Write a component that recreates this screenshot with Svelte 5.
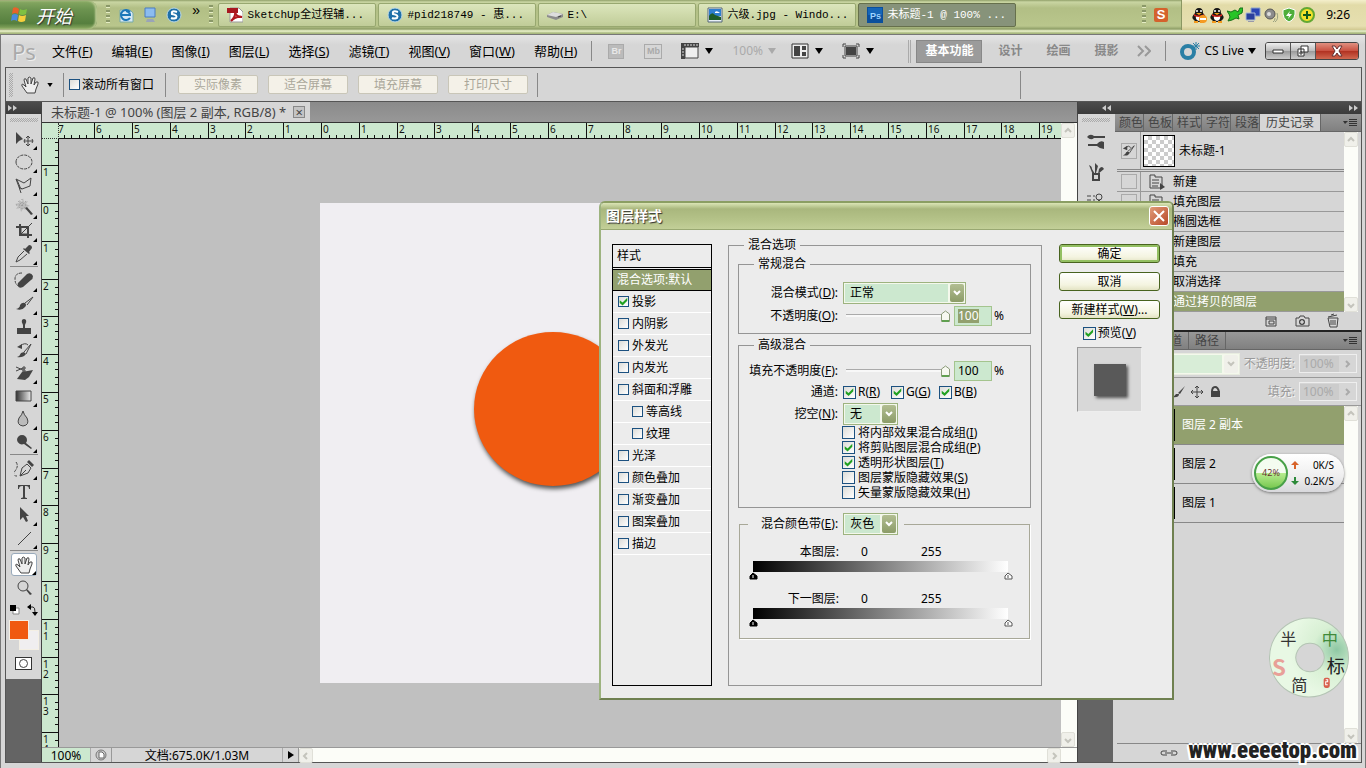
<script lang="ts">
	interface Tool {
		name: string;
		line?: string;
		solid?: string;
		dashed?: string;
		pale?: string;
		gap?: boolean;
		single?: boolean;
	}

	const hand =
		'M7 18L2 11Q1 8 4 10L6 12L4 5Q4 3 6 4L8 9V3Q9 1 11 3V9L13 3Q15 2 15 4L14 10L16 7Q19 6 18 9L16 14L15 18Z';

	const tools: Tool[] = [
		{ name: '移动', solid: 'M2 3V15L5 12L9 10Z', line: 'M10 12H19M14 8V16M12 9L14 7L16 9M12 15L14 17L16 15M11 10L10 12L11 14M18 10L19 12L18 14' },
		{ name: '椭圆选框', dashed: 'M2 10A8 7 0 0 1 18 10A8 7 0 0 1 2 10' },
		{ name: '多边形套索', line: 'M2 4L10 8L17 3L16 11L8 14L5 12ZM8 14L5 12L7 18M3 5L6 12' },
		{ name: '魔棒', pale: 'M9 0L10 4L14 3L12 6L16 8L12 9L13 12L9 11L7 14L6 10L2 11L4 8L1 6L5 5L5 2L8 4Z', solid: 'M11 10L13 9L19 16L17 17Z', dashed: 'M8 1V13M2 7H14M4 3L12 11M12 3L4 11' },
		{ name: '裁剪', line: 'M6 14L18 2M7 6V13H14', solid: 'M5 3H7V13H18V15H5ZM2 5H15V17H13V7H2Z' },
		{ name: '吸管', solid: 'M11 5L15 1Q18 1 18 4L15 8L16 9L15 10L9 5L10 4Z', line: 'M10 7L4 13L2 18L6 16L13 10' },
		{ name: '污点修复', dashed: 'M8 2Q1 2 1 8T5 15', solid: 'M5 11L13 3Q17 1 19 5Q19 8 17 9L9 16Q5 18 4 15Q3 12 5 11Z', gap: true },
		{ name: '画笔', solid: 'M2 15Q6 14 6 11Q8 8 11 9Q13 11 11 13Q8 17 2 15Z', line: 'M11 9L19 3L13 11' },
		{ name: '图章', solid: 'M8 3Q10 1 12 3Q13 5 11 8V11H17V17H3V11H9V8Q7 5 8 3Z' },
		{ name: '历史记录画笔', solid: 'M3 17Q6 16 7 13L10 12L12 14Q9 18 3 17ZM3 7L8 4V9Z', line: 'M10 12L17 4L12 14M6 6Q11 2 14 5' },
		{ name: '橡皮擦', solid: 'M8 9L19 7L15 14L11 17L3 16Z', line: 'M2 4L9 7M2 8L9 5M9 4H11V6H9ZM9 7H11V9H9Z' },
		{ name: '渐变' },
		{ name: '模糊', pale: 'M9 2Q10 6 13 9Q16 16 9 17Q2 16 5 9Q8 6 9 2Z', line: 'M9 2Q10 6 13 9Q16 16 9 17Q2 16 5 9Q8 6 9 2Z' },
		{ name: '减淡', solid: 'M3 8A5 5 0 0 1 13 8A5 5 0 0 1 12 11L18 16L17 17L10 12A5 5 0 0 1 3 8Z' },
		{ name: '钢笔', dashed: 'M2 3Q5 7 1 12T3 17', line: 'M6 17L8 9L13 5L17 9L14 14ZM6 17L12 11', solid: 'M13 3L15 1L20 6L18 8Z', gap: true },
		{ name: '文字', solid: 'M4 3H16V7H15Q15 4 12 4H11V15Q11 16 13 16V17H7V16Q9 16 9 15V4H8Q5 4 5 7H4Z' },
		{ name: '路径选择', solid: 'M6 2V15L9 12L12 17L14 16L12 11H15Z' },
		{ name: '直线', line: 'M4 17L17 4' },
		{ name: '抓手', line: hand, gap: true },
		{ name: '缩放', line: 'M4 8A5 5 0 0 1 14 8A5 5 0 0 1 4 8', solid: 'M12 12L13 11L18 16L16 17Z', single: true }
	];

	const menus = [
		['文件', 'F'], ['编辑', 'E'], ['图像', 'I'], ['图层', 'L'], ['选择', 'S'],
		['滤镜', 'T'], ['视图', 'V'], ['窗口', 'W'], ['帮助', 'H']
	];

	const tasks = [
		{ icon: 'pdf', title: 'SketchUp全过程辅...' },
		{ icon: 'sogou', title: '#pid218749 - 惠...' },
		{ icon: 'disk', title: 'E:\\' },
		{ icon: 'photo', title: '六级.jpg - Windo...' },
		{ icon: 'ps', title: '未标题-1 @ 100% ...' }
	];

	const fits = ['实际像素', '适合屏幕', '填充屏幕', '打印尺寸'];
	const panelTabs = ['颜色', '色板', '样式', '字符', '段落'];
	const history = ['新建', '填充图层', '椭圆选框', '新建图层', '填充', '取消选择', '通过拷贝的图层'];
	const layers = ['图层 2 副本', '图层 2', '图层 1'];

	let effects = [
		{ name: '投影', on: true, sub: false },
		{ name: '内阴影', on: false, sub: false },
		{ name: '外发光', on: false, sub: false },
		{ name: '内发光', on: false, sub: false },
		{ name: '斜面和浮雕', on: false, sub: false },
		{ name: '等高线', on: false, sub: true },
		{ name: '纹理', on: false, sub: true },
		{ name: '光泽', on: false, sub: false },
		{ name: '颜色叠加', on: false, sub: false },
		{ name: '渐变叠加', on: false, sub: false },
		{ name: '图案叠加', on: false, sub: false },
		{ name: '描边', on: false, sub: false }
	];

	let channels = [
		{ key: 'R', on: true },
		{ key: 'G', on: true },
		{ key: 'B', on: true }
	];

	let advanced = [
		{ name: '将内部效果混合成组', key: 'I', on: false },
		{ name: '将剪贴图层混合成组', key: 'P', on: true },
		{ name: '透明形状图层', key: 'T', on: true },
		{ name: '图层蒙版隐藏效果', key: 'S', on: false },
		{ name: '矢量蒙版隐藏效果', key: 'H', on: false }
	];

	let opacity = 100;
	let fill = 100;
	let preview = true;

	// One centimetre on the rulers
	const cm = 37.8;
	const range = (from: number, to: number) => Array.from({ length: to - from + 1 }, (_, i) => from + i);
	const across = range(-7, 19).map((n) => ({ n: Math.abs(n), at: Math.round(262 + n * cm) }));
	const down = range(-2, 14).map((n) => ({ n: Math.abs(n), at: Math.round(64 + n * cm) }));
	const minor = [1, 2, 3, 4].map((n) => Math.round((n * cm) / 5));
</script>

{#snippet keyed(text: string, key: string, tail = '')}<span>{text}(<u>{key}</u>){tail}</span>{/snippet}

{#snippet arrow()}<svg class="arrow" viewBox="0 0 8 6" aria-hidden="true"><path d="M0 0H8L4 6Z" /></svg>{/snippet}

{#snippet chevron(d: string)}<svg class="chev" viewBox="0 0 10 10" aria-hidden="true"><path {d} /></svg>{/snippet}

{#snippet scrollbar(kind: string)}
	<div class="scroll {kind}">
		<button aria-label="向前滚动">{@render chevron(kind === 'flat' ? 'M6 2L3 5L6 8' : 'M2 6L5 3L8 6')}</button>
		<button aria-label="向后滚动">{@render chevron(kind === 'flat' ? 'M4 2L7 5L4 8' : 'M2 4L5 7L8 4')}</button>
	</div>
{/snippet}

{#snippet panelMenu()}
	<svg class="panel-menu" viewBox="0 0 14 10" aria-hidden="true">
		<path d="M0 3H5L2 6Z" /><path d="M6 1H14V2H6ZM6 3H14V4H6ZM6 5H14V6H6ZM6 7H14V8H6Z" />
	</svg>
{/snippet}

{#snippet taskIcon(name: string)}
	<svg class="icon16" viewBox="0 0 16 16" aria-hidden="true">
		{#if name === 'pdf'}
			<path d="M3 1H12L16 5V15H3Z" fill="#fff" stroke="#999" /><path d="M0 1H11V6H0Z" fill="#a81820" />
			<path d="M4 14Q9 9 8 5Q9 10 15 10Q9 9 4 14" fill="none" stroke="#b01820" stroke-width="2" />
		{:else if name === 'sogou'}
			<circle cx="8" cy="8" r="7" fill="#1f6fa8" stroke="#b9d8e6" />
			<path d="M11 5Q5 3 6 7Q12 8 10 11Q7 12 5 11" fill="none" stroke="#fff" stroke-width="2" />
		{:else if name === 'disk'}
			<path d="M0 8L6 5L16 7V10L9 13L0 10Z" fill="#8c8c8c" /><path d="M0 8L6 5L16 7L9 10Z" fill="#ddd" />
			<path d="M11 10L14 9" stroke="#444" />
		{:else if name === 'photo'}
			<path d="M1 1H15V15H1Z" fill="#e8f0f8" stroke="#567" /><path d="M2 2H14V9H2Z" fill="#2f7fd0" />
			<path d="M2 9Q5 4 8 8L14 10V13H2Z" fill="#1e5c2a" /><path d="M8 5Q10 3 13 6H8Z" fill="#fff" />
		{:else if name === 'ps'}
			<path d="M0 0H16V16H0Z" fill="#0b4f9c" /><path d="M1 1H15V8H1Z" fill="#1566b8" />
			<text x="3" y="12" font-size="9" font-weight="700" fill="#9fd4ff" font-family="Liberation Sans, sans-serif">Ps</text>
		{:else if name === 'ie'}
			<path d="M2 3H12L15 6V15H2Z" fill="#d6e8f6" stroke="#7aa" /><path d="M12 5A5 5 0 1 0 12 11M4 8H12Q12 5 8 4" fill="none" stroke="#1b76b8" stroke-width="2" />
		{:else if name === 'desk'}
			<path d="M3 1H13V10H3Z" fill="#8bbcf0" stroke="#4b7cc0" /><path d="M5 12H11L13 15H4Z" fill="#9aa4b8" />
		{:else if name === 'qq' || name === 'qqbusy'}
			<path d="M8 1Q12 1 12 6Q16 10 14 12Q12 15 8 15Q4 15 2 12Q0 10 4 6Q4 1 8 1Z" fill="#161616" />
			<path d="M5 9H11Q12 13 8 14Q4 13 5 9Z" fill="#fff" /><path d="M3 7Q8 10 13 7V9Q8 11 3 9Z" fill="#d8231c" />
			<circle cx="6" cy="4" r="1" fill="#fff" /><circle cx="10" cy="4" r="1" fill="#fff" /><path d="M5 6H11L8 8Z" fill="#f7a51c" />
			<path d="M3 14H7V16H3ZM9 14H13V16H9Z" fill="#f39a1c" />
			{#if name === 'qqbusy'}<circle cx="12" cy="12" r="4" fill="#f59a23" /><path d="M9 11H15V13H9Z" fill="#fff" />{/if}
		{:else if name === 'turtle'}
			<path d="M0 4L4 5L8 3L11 5L13 1H16L15 6L11 8L12 12L9 11L5 13L1 14L3 10L2 7Z" fill="#27c427" stroke="#17701a" />
		{:else if name === 'net'}
			<path d="M6 1H15V9H6Z" fill="#2c46b4" stroke="#8fa4c8" /><path d="M1 6H10V13H1Z" fill="#2a3f9c" stroke="#a8b8d8" /><path d="M3 14H9V15H3Z" fill="#99a" />
		{:else if name === 'sound'}
			<circle cx="7" cy="7" r="5" fill="#8c8c8c" stroke="#555" /><circle cx="6" cy="7" r="2" fill="#ddd" />
			<path d="M12 15Q16 12 14 6M10 15Q12 14 12 11" fill="none" stroke="#98a080" />
		{:else if name === 'shield'}
			<path d="M8 1L14 3Q15 12 8 15Q1 12 2 3Z" fill="#4fae3a" stroke="#fff" /><path d="M9 4L5 9H8L7 12L11 7H8Z" fill="#fff" />
		{:else if name === 'plus'}
			<circle cx="8" cy="8" r="7" fill="#f3e22a" stroke="#62a832" stroke-width="2" /><path d="M7 4H9V7H12V9H9V12H7V9H4V7H7Z" fill="#125c1c" />
		{/if}
	</svg>
{/snippet}

<div class="screen">
	<header class="taskbar">
		<button class="start">
			<svg viewBox="0 0 20 20" aria-hidden="true">
				<path d="M3 3Q6 1 9 4L8 9Q5 7 2 9Z" fill="#e8622a" /><path d="M10 4Q13 6 17 4L16 9Q12 11 9 9Z" fill="#7fc142" />
				<path d="M2 10Q5 8 8 10L7 16Q4 14 1 16Z" fill="#4a8ae0" /><path d="M9 10Q12 12 16 10L15 16Q11 18 8 16Z" fill="#f6cf3c" />
			</svg>
			开始
		</button>
		<i class="dots"></i>
		<nav class="quick">
			{@render taskIcon('ie')}
			{@render taskIcon('desk')}
			{@render taskIcon('sogou')}
			<span>»</span>
		</nav>
		<i class="dots"></i>
		<nav class="tasks">
			{#each tasks as task (task.title)}
				<button class:active={task.icon === 'ps'}>{@render taskIcon(task.icon)}{task.title}</button>
			{/each}
		</nav>
		<i class="dots"></i>
		<span class="ime">S</span>
		<div class="tray">
			{#each ['qqbusy', 'qq', 'turtle', 'net', 'sound', 'shield', 'plus'] as name (name)}
				{@render taskIcon(name)}
			{/each}
			<time>9:26</time>
		</div>
	</header>

	<div class="window">
		<div class="menubar">
			<b class="logo">Ps</b>
			<nav class="menus">
				{#each menus as [text, key] (key)}
					<button>{@render keyed(text, key)}</button>
				{/each}
			</nav>
			<i class="rule"></i>
			<div class="app-icons">
				<span class="chip">Br</span>
				<span class="chip folder">Mb</span>
				<button aria-label="查看额外内容">
					<svg class="icon18" viewBox="0 0 18 16"><path d="M4 4H17V15H4Z" fill="#eee" stroke="#444" /><path class="solid" d="M0 0H18V4H4V16H0Z" /><path d="M4 1V3M7 1V3M10 1V3M13 1V3M16 1V3M1 6H3M1 9H3M1 12H3" stroke="#ddd" /></svg>
					{@render arrow()}
				</button>
				<button class="zoom" disabled>100% {@render arrow()}</button>
				<button class="arrange" aria-label="排列文档">
					<svg class="icon18" viewBox="0 0 18 16"><path d="M1 1H17V15H1Z" fill="#eee" stroke="#333" /><path class="solid" d="M3 3H9V13H3ZM11 3H15V7H11ZM11 9H15V13H11Z" /></svg>
					{@render arrow()}
				</button>
				<button aria-label="屏幕模式">
					<svg class="icon18" viewBox="0 0 18 16"><path class="solid" d="M4 4H14V12H4Z" /><path class="line" d="M3 3H15V13H3ZM1 4V1H4M14 1H17V4M1 12V15H4M14 15H17V12" /></svg>
					{@render arrow()}
				</button>
			</div>
			<div class="spaces">
				<button class="active">基本功能</button>
				<button>设计</button>
				<button>绘画</button>
				<button>摄影</button>
				<svg class="more" viewBox="0 0 14 12" aria-hidden="true"><path d="M1 1L6 6L1 11M8 1L13 6L8 11" /></svg>
			</div>
			<i class="rule"></i>
			<button class="live">
				<svg class="live-logo" viewBox="0 0 20 18" aria-hidden="true">
					<circle cx="8" cy="10" r="6" fill="none" stroke="#2a7fa5" stroke-width="4" />
					<path d="M16 0V8M12 4H20M13 1L19 7M19 1L13 7" stroke="#2a7fa5" />
				</svg>
				CS Live {@render arrow()}
			</button>
			<div class="win-buttons">
				<button aria-label="最小化"><svg viewBox="0 0 14 12"><path d="M2 5H12V8H2Z" fill="#fff" stroke="#333" /></svg></button>
				<button aria-label="还原"><svg viewBox="0 0 14 12"><path d="M5 1H12V7H5ZM2 4H8V11H2ZM4 7H6V9H4Z" fill="#fff" stroke="#333" /></svg></button>
				<button class="close" aria-label="关闭"><svg viewBox="0 0 14 12"><path d="M2 1H5L7 4L9 1H12L9 6L12 11H9L7 8L5 11H2L5 6Z" fill="#fff" stroke="#633" /></svg></button>
			</div>
		</div>

		<div class="options">
			<i class="grip"></i>
			<svg class="icon20" viewBox="0 0 20 20" aria-hidden="true"><path class="line pale" d={hand} /></svg>
			{@render arrow()}
			<i class="rule"></i>
			<label class="tick"><input type="checkbox" />滚动所有窗口</label>
			<i class="rule"></i>
			<div class="fits">
				{#each fits as name (name)}<button disabled>{name}</button>{/each}
			</div>
			<i class="rule"></i>
			<i class="rule last"></i>
		</div>

		<div class="work">
			<aside class="toolbox">
				<div class="dark"><svg viewBox="0 0 9 6"><path d="M0 0L4 3L0 6ZM5 0L9 3L5 6Z" /></svg></div>
				<div class="tools">
					<i class="grip flat"></i>
					{#each tools as tool (tool.name)}
						{#if tool.gap}<hr />{/if}
						<button class="tool" class:active={tool.name === '抓手'} class:single={tool.single} aria-label={tool.name}>
							<svg class="icon20" viewBox="0 0 20 20">
								{#if tool.name === '渐变'}
									<defs><linearGradient id="ramp"><stop offset="0" stop-color="#333" /><stop offset="1" stop-color="#eee" /></linearGradient></defs>
									<path d="M2 5H17V15H2Z" fill="url(#ramp)" stroke="#444" />
								{/if}
								{#if tool.pale}<path fill="#bbb" d={tool.pale} />{/if}
								{#if tool.line}<path class="line" class:pale={tool.name === '抓手'} d={tool.line} />{/if}
								{#if tool.solid}<path class="solid" d={tool.solid} />{/if}
								{#if tool.dashed}<path class="line dash" class:faded={tool.pale} d={tool.dashed} />{/if}
							</svg>
						</button>
					{/each}
					<svg class="swap" viewBox="0 0 30 12" aria-hidden="true">
						<path d="M4 4H10V10H4Z" fill="#fff" stroke="#888" /><path d="M1 1H7V7H1Z" fill="#000" />
						<path d="M21 3H24Q26 3 26 8" fill="none" stroke="#222" /><path d="M18 3L22 0V6ZM23 8H29L26 12Z" />
					</svg>
					<div class="swatches"><i class="back"></i><i class="front"></i></div>
					<button class="mask" aria-label="快速蒙版"><i></i></button>
				</div>
			</aside>

			<main class="document">
				<div class="tabs">
					<div class="tab">未标题-1 @ 100% (图层 2 副本, RGB/8) * <button aria-label="关闭文档">×</button></div>
				</div>
				<div class="view">
					<i class="corner"></i>
					<svg class="ruler">
						{#each across as mark (mark.at)}
							<path d="M{mark.at} 0V15" />
							{#each minor as step (step)}<path d="M{mark.at + step} 12V15" />{/each}
							<text x={mark.at + 2} y="10">{mark.n}</text>
						{/each}
					</svg>
					{@render scrollbar('tall')}
					<svg class="ruler side">
						{#each down as mark (mark.at)}
							<path d="M0 {mark.at}H16" />
							{#each minor as step (step)}<path d="M13 {mark.at + step}H16" />{/each}
							{#each String(mark.n) as digit, i (i)}
								<text x="1" y={mark.at + 11 + i * 10}>{digit}</text>
							{/each}
						{/each}
					</svg>
					<div class="pasteboard">
						<div class="artboard"><div class="ball"></div></div>
					</div>
				</div>
				<footer class="status">
					<span class="percent">100%</span>
					<span class="stamp"><svg viewBox="0 0 14 14"><circle cx="7" cy="7" r="5" fill="#ccc" stroke="#777" /><path d="M5 4H8L10 6V10H5Z" fill="#fff" stroke="#666" /></svg></span>
					<span class="size">文档:675.0K/1.03M</span>
					<span class="play"><svg viewBox="0 0 6 8"><path d="M0 0L6 4L0 8Z" /></svg></span>
					{@render scrollbar('flat')}
				</footer>
			</main>

			<aside class="right">
				<div class="dark">
					<svg viewBox="0 0 9 6"><path d="M4 0L0 3L4 6ZM9 0L5 3L9 6Z" /></svg>
					<svg viewBox="0 0 9 6"><path d="M0 0L4 3L0 6ZM5 0L9 3L5 6Z" /></svg>
				</div>
				<div class="columns">
					<div class="dock">
						<div class="dock-icons">
							<i class="grip flat"></i>
							<svg class="icon20" viewBox="0 0 20 20"><path class="solid" d="M1 5Q4 1 8 4H19V6H8Q5 9 1 5ZM2 12H11Q14 8 18 10V17Q14 17 11 14H2Z" /></svg>
							<svg class="icon20" viewBox="0 0 20 20"><path class="solid" d="M3 3Q6 4 6 7L9 12L7 13L5 8ZM9 1L12 4L10 11H9ZM13 7Q16 3 18 7L12 12Z" /><path class="line" stroke-width="2" d="M7 12H13V18H7Z" /></svg>
							<svg class="icon20" viewBox="0 0 20 20"><path class="line" d="M1 4H5M1 8H5M1 12H5M7 4H9M7 8H9" /><circle class="line" cx="13" cy="5" r="3" /><path class="solid" d="M12 8H14V16H12Z" /></svg>
						</div>
					</div>
					<div class="panels">
						<section>
							<div class="panel-tabs">
								{#each panelTabs as name (name)}<button>{name}</button>{/each}
								<button class="active">历史记录</button>
								{@render panelMenu()}
							</div>
							<div class="with-scroll">
								<div class="list">
									<div class="snapshot">
										<span class="slot"><span class="source"><svg class="icon16" viewBox="0 0 16 16"><path class="solid" d="M1 13Q4 12 5 9L8 9Q9 14 1 13ZM1 5L6 2V7Z" /><path class="line" d="M6 9L14 2L8 11M4 4Q8 1 10 4" /></svg></span></span>
										<i class="thumb"></i>
										未标题-1
									</div>
									<ul class="history">
										{#each history as step, i (step)}
											<li class:active={i === history.length - 1}>
												<span class="slot"><i class="well"></i></span>
												<svg class="icon16" viewBox="0 0 16 16"><path class="line" d="M1 14V1H6V3H13V14ZM3 6H10M3 9H10M3 12H9" /><path class="solid" d="M11 9V16L16 13Z" /></svg>
												{step}
											</li>
										{/each}
									</ul>
								</div>
								{@render scrollbar('tall')}
							</div>
							<div class="panel-foot">
								<svg class="icon16" viewBox="0 0 16 16"><path class="line" d="M3 4H13V13H3ZM3 6H13M6 8H11V11H6Z" /></svg>
								<svg class="icon16" viewBox="0 0 16 16"><path class="line" d="M2 5H5L6 3H10L11 5H15V13H2Z" /><circle class="solid" cx="8" cy="9" r="3" /><path d="M8 7V11M6 9H10" stroke="#fff" /></svg>
								<svg class="icon16" viewBox="0 0 16 16"><path class="line" d="M3 5H13L12 14H5ZM3 4L12 2M6 2L9 1M6 7V12M8 7V12M10 7V12" /></svg>
							</div>
						</section>

						<section class="layers">
							<div class="panel-tabs wide">
								<button class="active">图层</button><button>通道</button><button>路径</button>
								{@render panelMenu()}
							</div>
							<div class="layer-row">
								<span class="combo disabled">
									<select aria-label="图层混合模式" disabled><option></option></select>
									<span class="drop">{@render chevron('M2 3L5 6L8 3')}</span>
								</span>
								<label for="layer-opacity">不透明度:</label>
								<span class="number"><input id="layer-opacity" value="100%" disabled />{@render chevron('M4 2L7 5L4 8')}</span>
							</div>
							<div class="layer-row">
								<span class="locks">
									<svg class="icon16" viewBox="0 0 16 16"><path class="solid" d="M1 13Q4 12 5 10L8 10Q8 14 1 13ZM7 9L14 2L9 10Z" /></svg>
									<svg class="icon16" viewBox="0 0 16 16"><path class="line" d="M2 8H14M8 2V14M6 4L8 2L10 4M6 12L8 14L10 12M4 6L2 8L4 10M12 6L14 8L12 10" /></svg>
									<svg class="icon16" viewBox="0 0 16 16"><path class="solid" d="M4 7H13V13H4Z" /><path class="line" stroke-width="2" d="M5 8Q5 3 8 3T12 8" /></svg>
								</span>
								<label for="layer-fill">填充:</label>
								<span class="number"><input id="layer-fill" value="100%" disabled />{@render chevron('M4 2L7 5L4 8')}</span>
							</div>
							<div class="with-scroll grow">
								<ul class="list layer-list">
									{#each layers as layer, i (layer)}
										<li class:active={i === 0}><i class="thumb"></i>{layer}</li>
									{/each}
								</ul>
								{@render scrollbar('tall')}
							</div>
							<div class="panel-foot link">
								<svg viewBox="0 0 18 8" aria-hidden="true"><path class="line" d="M7 2H3Q1 2 1 4T3 6H7M11 2H15Q17 2 17 4T15 6H11M5 4H13" /></svg>
							</div>
						</section>
					</div>
				</div>
			</aside>
		</div>
	</div>

	<div class="dialog" role="dialog" aria-label="图层样式">
		<div class="title">
			<h1>图层样式</h1>
			<button aria-label="关闭"><svg viewBox="0 0 12 12"><path d="M1 1L11 11M11 1L1 11" stroke="#fff" stroke-width="2" /></svg></button>
		</div>
		<div class="body">
			<div class="styles">
				<div class="head">样式</div>
				<div class="current">混合选项:默认</div>
				{#each effects as effect (effect.name)}
					<label class="effect" class:sub={effect.sub}><input type="checkbox" bind:checked={effect.on} />{effect.name}</label>
				{/each}
			</div>

			<fieldset class="outer">
				<legend>混合选项</legend>
				<fieldset class="general">
					<legend>常规混合</legend>
					<div class="field combo-row">
						<label for="mode">{@render keyed('混合模式', 'D', ':')}</label>
						<span class="combo mode"><select id="mode"><option>正常</option></select><span class="drop">{@render chevron('M2 3L5 6L8 3')}</span></span>
					</div>
					<div class="field">
						<label for="opacity">{@render keyed('不透明度', 'O', ':')}</label>
						<input type="range" bind:value={opacity} aria-label="不透明度滑块" />
						<span class="value picked"><input id="opacity" size="3" bind:value={opacity} /></span>%
					</div>
				</fieldset>
				<fieldset class="second">
					<legend>高级混合</legend>
					<div class="field">
						<label for="fill">{@render keyed('填充不透明度', 'F', ':')}</label>
						<input type="range" bind:value={fill} aria-label="填充滑块" />
						<span class="value"><input id="fill" size="3" bind:value={fill} /></span>%
					</div>
					<div class="field">
						<span class="name">通道:</span>
						<div class="channels">
							{#each channels as channel (channel.key)}
								<label class="tick"><input type="checkbox" bind:checked={channel.on} />{@render keyed(channel.key, channel.key)}</label>
							{/each}
						</div>
					</div>
					<div class="field combo-row">
						<label for="knockout">{@render keyed('挖空', 'N', ':')}</label>
						<span class="combo short"><select id="knockout"><option>无</option></select><span class="drop">{@render chevron('M2 3L5 6L8 3')}</span></span>
					</div>
					<div class="advanced">
						{#each advanced as item (item.key)}
							<label class="tick"><input type="checkbox" bind:checked={item.on} />{@render keyed(item.name, item.key)}</label>
						{/each}
					</div>
				</fieldset>
				<fieldset class="blend-if">
					<legend>
						<label for="band">{@render keyed('混合颜色带', 'E', ':')}</label>
						<span class="combo short"><select id="band"><option>灰色</option></select><span class="drop">{@render chevron('M2 3L5 6L8 3')}</span></span>
					</legend>
					{#each ['本图层:', '下一图层:'] as name (name)}
						<div class="band">
							<div class="levels"><span class="name">{name}</span><span class="low">0</span><span>255</span></div>
							<div class="ramp"></div>
							<div class="stops">
								<svg viewBox="0 0 9 8"><path d="M4 1L8 4V7H1V4Z" fill="#000" stroke="#000" /><path d="M4 3V6" stroke="#fff" /></svg>
								<svg viewBox="0 0 9 8"><path d="M4 1L8 4V7H1V4Z" fill="#fff" stroke="#555" /><path d="M4 3V6" stroke="#555" /></svg>
							</div>
						</div>
					{/each}
				</fieldset>
			</fieldset>

			<div class="actions">
				<button class="default">确定</button>
				<button>取消</button>
				<button>{@render keyed('新建样式', 'W', '...')}</button>
				<label class="tick"><input type="checkbox" bind:checked={preview} />{@render keyed('预览', 'V')}</label>
				<div class="sample"><i></i></div>
			</div>
		</div>
	</div>

	<div class="speed">
		<b>42%</b>
		<svg viewBox="0 0 8 28" aria-hidden="true"><path d="M4 2L8 6H5V10H3V6H0Z" fill="#d8632a" /><path d="M3 18H5V22H8L4 26L0 22H3Z" fill="#2c8a3a" /></svg>
		<span>0K/S<br />0.2K/S</span>
	</div>

	<svg class="disc" viewBox="0 0 80 80" aria-label="输入法">
		<defs>
			<radialGradient id="jade" cx="0.85" cy="0.4" r="0.6"><stop offset="0" stop-color="#8fc8a4" /><stop offset="0.5" stop-color="#d8f0d4" /><stop offset="1" stop-color="#e8f8e4" /></radialGradient>
		</defs>
		<path d="M40 1A39 39 0 1 1 39 1ZM40 26A14 14 0 1 0 41 26Z" fill="url(#jade)" stroke="#b4c4b4" fill-rule="evenodd" />
		<text x="11" y="28" fill="#333">半</text>
		<text x="52" y="28" fill="#3f8a3a">中</text>
		<text x="57" y="55" font-size="18" fill="#222">标</text>
		<text x="22" y="73" fill="#333">简</text>
		<text class="faint" x="3" y="58" fill="#e8a098">S</text>
		<rect x="54" y="60" width="6" height="10" rx="2" fill="#d8604c" /><path d="M56 62H58V64H56V67H58" fill="none" stroke="#fff" />
	</svg>

	<a class="site" href="http://www.eeeetop.com">www.eeeetop.com</a>
</div>

<style>
	:global(body) {
		margin: 0;
		overflow: hidden;
	}

	.screen {
		position: relative;
		display: flex;
		flex-direction: column;
		height: 100vh;
		overflow: hidden;
		background: #d6d6d6;
		color: #000;
		font-family: 'Noto Sans', 'Noto Sans CJK SC', sans-serif;
		font-size: 12px;
		line-height: 16px;
	}

	button,
	input,
	select {
		box-sizing: border-box;
		margin: 0;
		padding: 0;
		border: 0;
		background: none;
		color: inherit;
		font: inherit;
	}

	ul {
		margin: 0;
		padding: 0;
		list-style: none;
	}

	button {
		white-space: nowrap;
	}

	svg {
		display: block;
		flex: none;
	}

	.icon16 {
		width: 16px;
		height: 16px;
	}

	.icon18 {
		width: 18px;
		height: 16px;
	}

	.icon20 {
		width: 20px;
		height: 20px;
	}

	.solid {
		fill: #444;
	}

	.line {
		fill: none;
		stroke: #444;
	}

	.line.pale {
		fill: #eee;
	}

	.dash {
		stroke-dasharray: 3 1;
	}

	.faded {
		stroke: #999;
		stroke-dasharray: 1 2;
	}

	.arrow {
		width: 8px;
		height: 6px;
	}

	.chev {
		width: 10px;
		height: 10px;
		fill: none;
		stroke: currentColor;
		stroke-width: 2;
	}

	/* Taskbar */
	.taskbar {
		display: flex;
		flex: none;
		box-sizing: border-box;
		align-items: center;
		height: 34px;
		padding-bottom: 5px;
		background: linear-gradient(#91a069 0, #c9d5a2 2px, #b2bf85 8px, #b9c68c 26px, #8f9f68 29px, #eef5cf 31px, #a8b87e 33px);
		font-family: 'Liberation Mono', 'Noto Sans CJK SC', monospace;
		font-size: 11px;
	}

	.start {
		display: flex;
		box-sizing: border-box;
		align-items: center;
		gap: 6px;
		width: 97px;
		height: 28px;
		padding-left: 10px;
		border-radius: 0 8px 8px 0;
		background: linear-gradient(#86a862, #6c9350 30%, #567f3e 80%, #8aaa60);
		box-shadow: inset -2px 0 2px #b8c890;
		color: #fff;
		font-family: 'Noto Sans CJK SC', sans-serif;
		font-size: 18px;
		font-style: italic;
		line-height: 24px;
		text-shadow: 1px 1px 1px #333;
	}

	.start svg {
		width: 20px;
		height: 20px;
	}

	.dots {
		flex: none;
		width: 4px;
		height: 20px;
		margin-left: 9px;
		background: repeating-linear-gradient(#8a9868 0, #8a9868 2px, #e4ecc4 2px, #e4ecc4 3px, transparent 3px, transparent 5px);
	}

	.quick {
		display: flex;
		align-items: center;
		gap: 8px;
		margin-left: 8px;
	}

	.quick span {
		margin: -8px 0 0 2px;
		font-size: 14px;
	}

	.tasks {
		display: flex;
		flex: 1;
		gap: 2px;
		margin-left: 5px;
	}

	.tasks button {
		display: flex;
		flex: 0 1 158px;
		align-items: center;
		gap: 4px;
		height: 24px;
		padding-left: 8px;
		border: 1px solid #98a870;
		border-radius: 2px;
		background: linear-gradient(#dce6bc, #c0cc98);
		overflow: hidden;
	}

	.tasks button.active {
		border-color: #66704c;
		background: #87937a;
		color: #fff;
	}

	.ime {
		width: 14px;
		margin: 0 13px 0 8px;
		border-radius: 2px;
		background: #d4622c;
		color: #fff;
		font: bold 13px/14px 'Liberation Sans', sans-serif;
		text-align: center;
	}

	.tray {
		display: flex;
		box-sizing: border-box;
		align-items: center;
		gap: 2px;
		height: 30px;
		padding: 0 16px 0 9px;
		border-left: 1px solid #8a9662;
		background: linear-gradient(#f4efcc, #e2dba8 5px, #e6dfb0 26px, #d0c890);
	}

	.tray time {
		margin-left: 9px;
		font-family: 'Noto Sans', sans-serif;
		font-size: 12px;
	}

	/* Application frame */
	.window {
		display: flex;
		flex: 1;
		flex-direction: column;
		min-height: 0;
		padding: 0 3px 5px 4px;
		border: 1px solid #777;
		border-bottom: 0;
		background: linear-gradient(#e4e4e4, #d6d6d6 10px);
	}

	.rule {
		flex: none;
		width: 1px;
		height: 24px;
		background: #888;
	}

	.grip {
		flex: none;
		width: 4px;
		height: 24px;
		background: repeating-conic-gradient(#aaa 0 25%, #d6d6d6 0 50%) 0 0 / 2px 2px;
	}

	.grip.flat {
		width: 28px;
		height: 4px;
	}

	.menubar {
		display: flex;
		flex: none;
		align-items: center;
		height: 32px;
		padding-left: 7px;
	}

	.logo {
		width: 40px;
		color: #aaa;
		font: 22px/24px 'Noto Sans', sans-serif;
		text-shadow: 1px 1px #eee;
	}

	.menus {
		display: flex;
		gap: 19px;
		margin-right: 14px;
		font-size: 13px;
	}

	.menubar .rule {
		height: 20px;
	}

	.app-icons {
		display: flex;
		align-items: center;
		margin-left: 16px;
	}

	.app-icons button {
		display: flex;
		align-items: center;
		gap: 6px;
		margin-left: 19px;
	}

	.app-icons .zoom {
		gap: 5px;
		color: #aaa;
	}

	.app-icons .arrange {
		margin-left: 15px;
	}

	.zoom .arrow {
		fill: #aaa;
	}

	.chip {
		box-sizing: border-box;
		width: 16px;
		margin-right: 20px;
		border: 1px solid #aaa;
		background: #bbb;
		color: #e8e8e8;
		font: bold 9px/13px 'Liberation Sans', sans-serif;
		text-align: center;
	}

	.chip.folder {
		width: 18px;
		margin-right: 0;
		background: none;
		color: #aaa;
	}

	.spaces {
		display: flex;
		align-items: center;
		margin: 0 14px 0 auto;
		padding-left: 5px;
		border-left: 3px double #aaa;
	}

	.spaces button {
		width: 48px;
		color: #888;
		font-weight: bold;
	}

	.spaces .active {
		width: 66px;
		height: 23px;
		margin-right: 4px;
		border: 1px solid #888;
		background: #9b9b9b;
		color: #fff;
	}

	.more {
		width: 14px;
		height: 12px;
		margin-left: 7px;
		fill: none;
		stroke: #999;
		stroke-width: 2;
	}

	.live {
		display: flex;
		align-items: center;
		gap: 4px;
		margin-left: 14px;
	}

	.live-logo {
		width: 20px;
		height: 18px;
	}

	.win-buttons {
		display: flex;
		margin: 0 3px 0 9px;
		border: 1px solid #444;
		border-radius: 3px;
		overflow: hidden;
	}

	.win-buttons button {
		display: grid;
		place-items: center;
		width: 25px;
		height: 16px;
		border-right: 1px solid #555;
		background: linear-gradient(#eee, #bbb 50%, #999 50%, #ccc);
	}

	.win-buttons .close {
		width: 42px;
		border: 0;
		background: linear-gradient(#e09080, #c85040 50%, #b03020 50%, #d06850);
	}

	.win-buttons svg {
		width: 14px;
		height: 12px;
	}

	.options {
		display: flex;
		flex: none;
		align-items: center;
		height: 33px;
		padding-left: 3px;
		border: 1px solid #555;
		background: #d6d6d6;
	}

	.options .icon20 {
		margin: 0 7px 0 7px;
	}

	.options .arrow {
		width: 6px;
		height: 4px;
		margin-right: 10px;
	}

	.options .tick {
		margin: 0 11px 0 5px;
	}

	.fits {
		display: flex;
		gap: 10px;
		margin: 0 9px 0 12px;
	}

	.fits button {
		width: 80px;
		height: 19px;
		border: 1px solid #c9c6b8;
		border-radius: 2px;
		background: #f4f1e8;
		color: #aaa79a;
	}

	.options .last {
		height: 28px;
		margin: 0 340px 0 auto;
	}

	/* Check boxes */
	.tick {
		display: flex;
		align-items: center;
		gap: 2px;
		white-space: nowrap;
	}

	input[type='checkbox'] {
		display: grid;
		flex: none;
		place-items: center;
		width: 13px;
		height: 13px;
		border: 1px solid #1c5180;
		background: linear-gradient(135deg, #dcdcd8, #fff);
		appearance: none;
	}

	.options input[type='checkbox'],
	.effect input[type='checkbox'] {
		width: 11px;
		height: 11px;
	}

	input[type='checkbox']:checked::after {
		width: 9px;
		height: 9px;
		background: #21a121;
		clip-path: polygon(8% 35%, 40% 60%, 92% 8%, 92% 42%, 40% 95%, 8% 68%);
		content: '';
	}

	/* Workspace */
	.work {
		display: flex;
		flex: 1;
		min-height: 0;
		border: 1px solid #555;
		border-top: 0;
	}

	.dark {
		display: flex;
		flex: none;
		align-items: center;
		justify-content: space-between;
		height: 12px;
		background: linear-gradient(#4c4c4c, #3a3a3a);
	}

	.dark svg {
		width: 9px;
		height: 6px;
		fill: #ccc;
	}

	.toolbox {
		display: flex;
		flex: none;
		box-sizing: border-box;
		flex-direction: column;
		width: 36px;
		background: #646464;
		border-right: 1px solid #444;
	}

	.toolbox .dark {
		padding-left: 2px;
	}

	.tools {
		display: flex;
		flex-direction: column;
		align-items: center;
		padding: 4px 0 9px;
		background: #d6d6d6;
	}

	.tools .grip {
		margin-bottom: 5px;
	}

	.tools hr {
		width: 28px;
		height: 1px;
		margin: 1px 0 2px;
		border: 0;
		background: #888;
	}

	.tool {
		position: relative;
		display: grid;
		place-items: center;
		width: 26px;
		height: 23px;
	}

	.tool.active {
		border: 1px solid #9ab;
		border-radius: 3px;
		background: #fff;
	}

	/* Corner mark for tools that hold more tools */
	.tool::after {
		position: absolute;
		right: 0;
		bottom: 0;
		border: 2px solid #000;
		border-color: transparent #000 #000 transparent;
		content: '';
	}

	.tool.single::after {
		display: none;
	}

	.swap {
		width: 30px;
		height: 12px;
		margin: 5px 0 4px;
	}

	.swatches {
		display: grid;
		grid-template: 10px 10px 10px / 10px 10px 10px;
	}

	.swatches i {
		border: 1px solid #f4efe4;
	}

	.front {
		grid-area: 1 / 1 / 3 / 3;
		background: #f05a10;
	}

	.back {
		grid-area: 2 / 2 / 4 / 4;
		background: #f0eef0;
	}

	.mask {
		display: grid;
		place-items: center;
		width: 17px;
		height: 13px;
		margin-top: 7px;
		border: 1px solid #333;
		background: #fff;
	}

	.mask i {
		width: 7px;
		height: 7px;
		border: 1px solid #444;
		border-radius: 50%;
	}

	.document {
		display: flex;
		flex: 1;
		flex-direction: column;
		min-width: 0;
	}

	.tabs {
		display: flex;
		flex: none;
		height: 20px;
		border-bottom: 1px solid #333;
		background: linear-gradient(#8a8a8a, #989898);
	}

	.tab {
		display: flex;
		align-items: center;
		gap: 7px;
		padding: 0 5px 0 9px;
		background: #d6d6d6;
		color: #444;
		font-size: 13px;
		white-space: nowrap;
	}

	.tab button {
		width: 12px;
		height: 12px;
		border: 1px solid #888;
		background: #c4c4c4;
		line-height: 9px;
	}

	.view {
		display: grid;
		flex: 1;
		grid-template: 16px minmax(0, 1fr) / 17px minmax(0, 1fr) 16px;
		min-height: 0;
	}

	.corner,
	.ruler {
		background: #cce8cf;
	}

	.corner {
		box-sizing: border-box;
		border-right: 1px dotted #333;
		border-bottom: 1px dotted #333;
	}

	.ruler {
		box-sizing: border-box;
		width: 100%;
		height: 100%;
		overflow: hidden;
		border-bottom: 1px solid #111;
		stroke: #111;
		shape-rendering: crispEdges;
	}

	.ruler text {
		font-size: 10px;
		fill: #111;
		stroke: none;
	}

	.ruler.side {
		border-right: 1px solid #111;
		border-bottom: 0;
	}

	.view .scroll {
		grid-area: 1 / 3 / 3 / 4;
	}

	.pasteboard {
		position: relative;
		background: #c0c0c0;
		overflow: hidden;
	}

	.artboard {
		position: absolute;
		top: 64px;
		left: 261px;
		width: 480px;
		height: 480px;
		background: #f0eef2;
	}

	.ball {
		position: absolute;
		top: 129px;
		left: 154px;
		width: 158px;
		height: 154px;
		border-radius: 50%;
		background: #f05a10;
		box-shadow: 1px 3px 4px #555;
	}

	.scroll {
		display: flex;
		flex: none;
		justify-content: space-between;
		background: #fcfdf8;
	}

	.scroll.tall {
		flex-direction: column;
		width: 14px;
	}

	.view .scroll.tall {
		width: 16px;
	}

	.scroll button {
		display: grid;
		place-items: center;
		width: 14px;
		height: 15px;
		border: 1px solid #e0e0d8;
		border-radius: 2px;
		background: #f0f0ea;
		color: #c4c4bc;
	}

	.status {
		display: flex;
		flex: none;
		height: 14px;
		border-top: 1px solid #999;
		line-height: 15px;
	}

	.percent {
		box-sizing: border-box;
		width: 48px;
		background: #cce8cf;
		text-align: center;
	}

	.stamp,
	.play {
		display: grid;
		place-items: center;
		box-sizing: border-box;
		width: 22px;
		border-right: 1px solid #999;
		border-left: 1px solid #aaa;
	}

	.stamp svg {
		width: 14px;
		height: 14px;
	}

	.size {
		width: 170px;
		text-align: center;
	}

	.play {
		width: 17px;
	}

	.play svg {
		width: 6px;
		height: 8px;
	}

	.scroll.flat {
		flex: 1;
		padding-right: 16px;
	}

	/* Panels */
	.right {
		display: flex;
		flex: none;
		box-sizing: border-box;
		flex-direction: column;
		width: 284px;
		border-left: 1px solid #444;
	}

	.right .dark {
		padding: 0 3px 0 24px;
	}

	.columns {
		display: flex;
		flex: 1;
		min-height: 0;
	}

	.dock {
		flex: none;
		width: 35px;
		margin-right: 2px;
		background: #646464;
	}

	.dock-icons {
		display: flex;
		flex-direction: column;
		align-items: center;
		gap: 10px;
		padding: 4px 0 170px;
		background: #d6d6d6;
	}

	.panels {
		display: flex;
		flex: 1;
		flex-direction: column;
		min-width: 0;
	}

	.layers {
		display: flex;
		flex: 1;
		flex-direction: column;
		min-height: 0;
		border-top: 2px solid #222;
	}

	.panel-tabs {
		display: flex;
		height: 17px;
		border-bottom: 1px solid #666;
		background: linear-gradient(#989898, #808080);
		color: #444;
	}

	.panel-tabs button {
		width: 29px;
		padding-left: 4px;
		border-right: 1px solid #666;
		text-align: left;
		overflow: hidden;
	}

	.panel-tabs .active {
		width: 61px;
		padding-left: 6px;
		background: #d6d6d6;
	}

	.panel-tabs.wide button {
		width: 37px;
		padding-left: 6px;
	}

	.panel-menu {
		width: 14px;
		height: 10px;
		margin: 4px 4px 0 auto;
		fill: #333;
	}

	.with-scroll {
		display: flex;
		padding-right: 3px;
	}

	.list {
		flex: 1;
		margin-left: 2px;
	}

	.slot {
		display: grid;
		place-items: center;
		align-self: stretch;
		width: 23px;
		border-right: 1px solid #999;
	}

	.source {
		border: 1px solid #aaa;
	}

	.source .icon16 {
		width: 14px;
		height: 14px;
	}

	.snapshot {
		display: flex;
		align-items: center;
		height: 37px;
		border-bottom: 3px double #888;
	}

	.thumb {
		width: 30px;
		height: 30px;
		margin: 0 4px 0 2px;
		border: 1px solid #000;
		background: repeating-conic-gradient(#ccc 0 25%, #fff 0 50%) 0 0 / 8px 8px;
	}

	.history li {
		display: flex;
		align-items: center;
		height: 19px;
		border-bottom: 1px solid #999;
	}

	.history li.active,
	.layer-list li.active {
		background: #92a06e;
		color: #fff;
	}

	.history .icon16 {
		margin: 0 8px;
	}

	.well {
		width: 14px;
		height: 13px;
		border: 1px solid #aaa;
	}

	.panel-foot {
		display: flex;
		align-items: center;
		justify-content: flex-end;
		gap: 15px;
		height: 18px;
		padding-right: 20px;
	}

	.panel-foot.link {
		justify-content: flex-start;
		margin-left: 2px;
		padding-left: 43px;
		border-top: 1px solid #888;
	}

	.link svg {
		width: 18px;
		height: 8px;
	}

	.layer-row {
		display: flex;
		align-items: center;
		gap: 4px;
		height: 27px;
		padding-right: 4px;
		border-bottom: 1px solid #999;
		color: #999;
		white-space: nowrap;
		text-shadow: 1px 1px #f4f4f4;
	}

	.layer-row .combo {
		width: 125px;
	}

	.locks {
		display: flex;
		flex: 1;
		gap: 2px;
		padding-left: 56px;
	}

	.number {
		display: flex;
		align-items: center;
		gap: 3px;
		width: 56px;
		height: 17px;
		border: 1px solid #eee;
		color: #aaa;
	}

	.number input {
		width: 39px;
		padding-left: 3px;
		background: #ccc;
	}

	.grow {
		flex: 1;
		min-height: 0;
	}

	.layer-list {
		margin-left: 0;
	}

	.layer-list li {
		display: flex;
		align-items: center;
		height: 38px;
		padding-left: 22px;
		border-bottom: 1px solid #888;
	}

	.layer-list .thumb {
		width: 36px;
		margin: 0 7px 0 0;
	}

	/* Layer style dialog */
	.dialog {
		position: absolute;
		top: 201px;
		left: 599px;
		box-sizing: border-box;
		width: 575px;
		border: 2px solid #8b9e63;
		border-color: #8b9e63 #6f8050 #6f8050 #9db37f;
		border-radius: 6px 6px 0 0;
		background: #ececec;
	}

	.title {
		display: flex;
		align-items: center;
		justify-content: space-between;
		height: 26px;
		padding: 0 3px 0 5px;
		border-bottom: 1px solid #99a872;
		border-radius: 4px 4px 0 0;
		background: linear-gradient(#dbe5b6, #a9b77d 6px, #b6c48a 18px, #c2cf98);
	}

	h1 {
		margin: 0;
		color: #fff;
		font-size: 14px;
		line-height: 20px;
		text-shadow: 1px 1px 1px #333;
	}

	.title button {
		display: grid;
		place-items: center;
		width: 20px;
		height: 20px;
		border: 1px solid #fff;
		border-radius: 3px;
		background: linear-gradient(135deg, #e09a78, #b84a28);
	}

	.title svg {
		width: 12px;
		height: 12px;
	}

	.body {
		display: flex;
		align-items: flex-start;
		padding: 7px 11px 12px;
	}

	.styles {
		box-sizing: border-box;
		align-self: stretch;
		width: 101px;
		margin: 7px 16px 0 0;
		border: 1px solid #000;
	}

	.head {
		height: 22px;
		padding-left: 4px;
		border-bottom: 3px double #000;
		line-height: 22px;
	}

	.current {
		height: 20px;
		padding-left: 4px;
		border-bottom: 1px solid #000;
		background: #92a06e;
		color: #fff;
		line-height: 20px;
		white-space: nowrap;
	}

	.effect {
		display: flex;
		align-items: center;
		gap: 3px;
		height: 21px;
		padding-left: 5px;
		border-bottom: 1px solid #fff;
	}

	.effect.sub {
		padding-left: 19px;
	}

	fieldset {
		min-width: 0;
		margin: 0;
		padding: 0 0 6px;
		border: 1px solid #959595;
	}

	legend {
		margin-left: 15px;
		padding: 0 4px;
	}

	.outer {
		flex: none;
		box-sizing: border-box;
		width: 314px;
		padding: 3px 10px 46px 9px;
	}

	.outer > legend {
		margin-left: 6px;
	}

	.field {
		display: flex;
		align-items: center;
		height: 20px;
		margin-top: 1px;
	}

	.combo-row {
		height: 22px;
	}

	.field > label,
	.name {
		width: 99px;
		margin-right: 5px;
		text-align: right;
		white-space: nowrap;
	}

	.general {
		padding-bottom: 7px;
	}

	.general .combo-row {
		margin: 10px 0 2px;
	}

	.second {
		margin-top: 3px;
		padding-bottom: 7px;
	}

	.second > .field:nth-of-type(1) {
		margin-top: 8px;
	}

	.combo {
		display: flex;
		box-sizing: border-box;
		height: 22px;
		padding: 1px;
		border: 1px solid #9db37f;
		background: #f4f8ec;
	}

	.combo select {
		flex: 1;
		width: 40px;
		padding-left: 5px;
		background: #cce8cf;
		appearance: none;
	}

	.drop {
		display: grid;
		place-items: center;
		width: 14px;
		margin: 0 0 0 2px;
		border-radius: 2px;
		background: linear-gradient(#b2be92, #8c9c68);
		color: #fff;
	}

	.combo.disabled {
		border-color: #e8ece0;
	}

	.disabled .drop {
		background: #f0f0ea;
		color: #c4c4bc;
	}

	.mode {
		width: 123px;
	}

	.short {
		width: 55px;
	}

	input[type='range'] {
		width: 104px;
		height: 14px;
		margin: 0 4px 0 3px;
		background: linear-gradient(transparent 5px, #aaa 5px, #aaa 6px, #f8f8f8 6px, #f8f8f8 8px, transparent 8px);
		appearance: none;
	}

	input[type='range']::-webkit-slider-thumb {
		width: 9px;
		height: 12px;
		background: url("data:image/svg+xml,%3Csvg xmlns='http://www.w3.org/2000/svg' width='9' height='12'%3E%3Cpath d='M4.5 1L8.5 4V11.5H.5V4Z' fill='%23f6f8f0' stroke='%238a9a78'/%3E%3Cpath d='M1 10H8V12H1Z' fill='%2360a050'/%3E%3C/svg%3E");
		appearance: none;
	}

	.value {
		display: flex;
		align-items: center;
		box-sizing: border-box;
		width: 38px;
		height: 20px;
		margin-right: 2px;
		padding-left: 3px;
		border: 1px solid #a4c48e;
		background: #cce8cf;
	}

	.value input {
		width: 21px;
		line-height: 14px;
	}

	.picked input {
		background: #92a06e;
		color: #fff;
	}

	.channels {
		display: flex;
	}

	.channels .tick {
		width: 48px;
	}

	.advanced {
		margin-left: 103px;
	}

	.advanced .tick {
		gap: 3px;
		height: 15px;
	}

	.blend-if {
		margin: 5px 1px 0;
		padding-bottom: 11px;
		border-color: #a8a898;
		box-shadow: 1px 1px #fff;
	}

	.blend-if legend {
		display: flex;
		align-items: center;
		gap: 5px;
		margin-left: 8px;
		padding: 0 6px 0 13px;
	}

	.band {
		padding-top: 9px;
	}

	.band + .band {
		padding-top: 11px;
	}

	.levels {
		display: flex;
		height: 16px;
	}

	.low {
		width: 60px;
		margin-left: 17px;
	}

	.ramp {
		width: 255px;
		height: 11px;
		margin: 1px 0 0 13px;
		background: linear-gradient(90deg, #000, #fff);
	}

	.stops {
		display: flex;
		justify-content: space-between;
		width: 264px;
		margin-left: 9px;
	}

	.stops svg {
		width: 9px;
		height: 8px;
	}

	.actions {
		display: flex;
		flex: 1;
		flex-direction: column;
		align-items: center;
		gap: 9px;
		margin: 7px 1px 0 17px;
	}

	.actions button {
		width: 101px;
		height: 19px;
		border: 1px solid #48631f;
		border-radius: 3px;
		background: linear-gradient(#fff, #f4f4e0 70%, #e4e4c4);
	}

	.actions .default {
		box-shadow: inset 0 0 0 2px #93bf62;
	}

	.actions .tick {
		margin: -3px 0 -3px;
	}

	.sample {
		display: grid;
		place-items: center;
		width: 63px;
		height: 63px;
		border: 1px solid #999;
		border-color: #999 #eee #eee #999;
		background: #d8d8d8;
	}

	.sample i {
		width: 32px;
		height: 32px;
		background: #595959;
		box-shadow: 2px 2px 3px #555;
	}

	/* Floating widgets */
	.speed {
		position: absolute;
		top: 454px;
		right: 22px;
		display: flex;
		box-sizing: border-box;
		align-items: center;
		width: 92px;
		height: 38px;
		padding: 0 10px 0 2px;
		border-radius: 19px;
		background: linear-gradient(#fff, #eee 60%, #d8d8dc);
		box-shadow: 0 1px 3px #777;
		font-size: 10px;
	}

	.speed b {
		box-sizing: border-box;
		width: 34px;
		height: 34px;
		border: 2px solid #48a048;
		border-radius: 50%;
		background: linear-gradient(#f4fcf0 50%, #b8ec90 50%, #78c850);
		color: #633;
		font-size: 9px;
		font-weight: normal;
		line-height: 30px;
		text-align: center;
	}

	.speed svg {
		width: 8px;
		height: 28px;
		margin-left: 3px;
	}

	.speed span {
		flex: 1;
		text-align: right;
		white-space: nowrap;
	}

	.disc {
		position: absolute;
		right: 16px;
		bottom: 70px;
		width: 81px;
		height: 81px;
		font-family: 'Noto Sans CJK SC', sans-serif;
		font-size: 16px;
	}

	.faint {
		font-weight: bold;
		font-size: 22px;
	}

	.site {
		position: absolute;
		right: 9px;
		bottom: 4px;
		color: #222;
		font: 900 23px/26px 'Liberation Sans Narrow', 'Roboto Condensed', Roboto, sans-serif;
		text-decoration: none;
		text-shadow: 0 2px #fff, 2px 0 #fff, -2px 0 #fff, 0 -2px #fff, 2px 2px #fff, -2px 2px #fff;
	}
</style>
